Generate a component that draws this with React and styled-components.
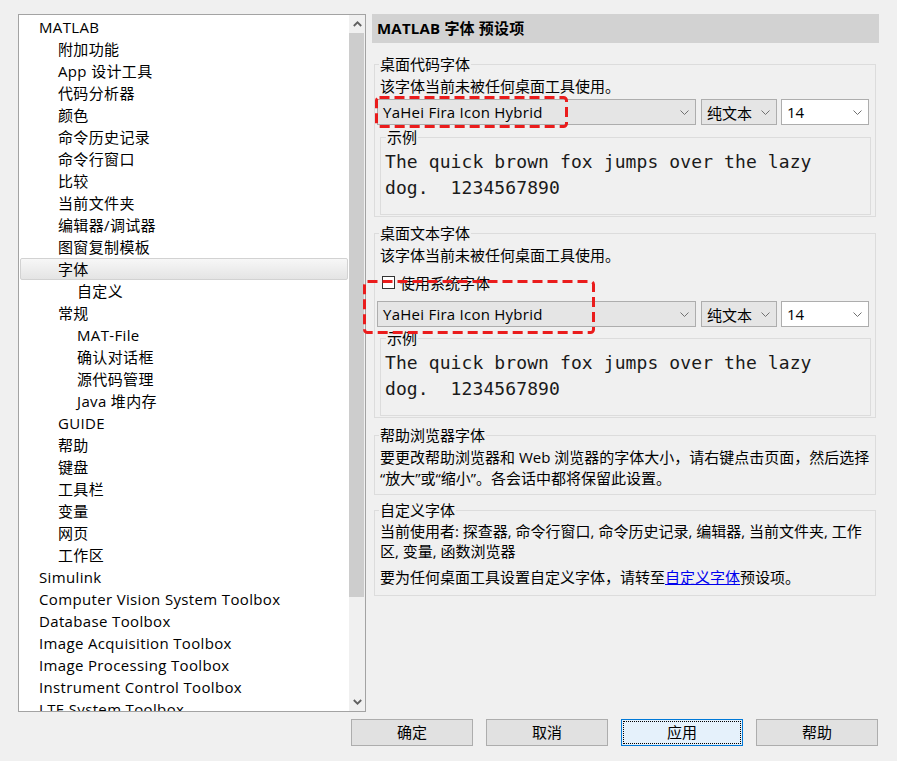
import React from 'react';
import styled, { createGlobalStyle } from 'styled-components';

const GlobalStyle = createGlobalStyle`
  body {
    margin: 0;
    background: #f0f0f0;
    font-family: "Open Sans", "Noto Sans CJK SC", sans-serif;
    font-size: 15px;
    color: #000;
  }
`;

const treeItems = [
  ['MATLAB', 0],
  ['附加功能', 1],
  ['App 设计工具', 1],
  ['代码分析器', 1],
  ['颜色', 1],
  ['命令历史记录', 1],
  ['命令行窗口', 1],
  ['比较', 1],
  ['当前文件夹', 1],
  ['编辑器/调试器', 1],
  ['图窗复制模板', 1],
  ['字体', 1, true],
  ['自定义', 2],
  ['常规', 1],
  ['MAT-File', 2],
  ['确认对话框', 2],
  ['源代码管理', 2],
  ['Java 堆内存', 2],
  ['GUIDE', 1],
  ['帮助', 1],
  ['键盘', 1],
  ['工具栏', 1],
  ['变量', 1],
  ['网页', 1],
  ['工作区', 1],
  ['Simulink', 0],
  ['Computer Vision System Toolbox', 0],
  ['Database Toolbox', 0],
  ['Image Acquisition Toolbox', 0],
  ['Image Processing Toolbox', 0],
  ['Instrument Control Toolbox', 0],
  ['LTE System Toolbox', 0],
];

const Chevron = ({ up }) => (
  <svg width="9" height="6" viewBox="0 0 9 6">
    <polyline
      points={up ? '0.8,5 4.5,1.3 8.2,5' : '0.8,1 4.5,4.7 8.2,1'}
      fill="none"
      stroke="#606060"
      strokeWidth="1.8"
    />
  </svg>
);

const SmallChevron = () => (
  <svg width="9" height="5" viewBox="0 0 9 5">
    <polyline points="0.5,0.5 4.5,4.5 8.5,0.5" fill="none" stroke="#707070" strokeWidth="1" />
  </svg>
);

const DashedMark = ({ left, top, width, height }) => (
  <Mark style={{ left, top }} width={width} height={height}>
    <rect
      x="1.5"
      y="1.5"
      width={width - 3}
      height={height - 3}
      rx="3"
      fill="none"
      stroke="#ea1c1c"
      strokeWidth="3"
      strokeDasharray="10 5"
    />
  </Mark>
);

const FontCombos = ({ children }) => (
  <>
    <Combo $width={319} $latin>
      YaHei Fira Icon Hybrid
      <SmallChevron />
    </Combo>
    <Combo $width={76} $gap={5}>
      纯文本
      <SmallChevron />
    </Combo>
    <Combo $width={88} $gap={4} $white>
      14
      <SmallChevron />
    </Combo>
    {children}
  </>
);

const App = () => {
  return (
    <>
      <GlobalStyle />
      <Window>
        <Body>
          <Tree>
            <TreeList>
              {treeItems.map(([label, level, selected]) => (
                <TreeRow key={label} $level={level} $selected={selected}>
                  {label}
                </TreeRow>
              ))}
            </TreeList>
            <ScrollBar>
              <ScrollButton>
                <Chevron up />
              </ScrollButton>
              <Thumb />
              <Track />
              <ScrollButton>
                <Chevron />
              </ScrollButton>
            </ScrollBar>
          </Tree>

          <Panel>
            <PanelHeader>MATLAB 字体 预设项</PanelHeader>
            <Groups>
              <Group $top={11}>
                <Legend>桌面代码字体</Legend>
                <Line>该字体当前未被任何桌面工具使用。</Line>
                <ComboRow $top={2}>
                  <FontCombos>
                    <DashedMark left={-2} top={-3} width={193} height={32} />
                  </FontCombos>
                </ComboRow>
                <Sample $top={2}>
                  <SampleLegend>示例</SampleLegend>
                  <SampleText>{'The quick brown fox jumps over the lazy\ndog.  1234567890'}</SampleText>
                </Sample>
              </Group>

              <Group $top={6}>
                <Legend>桌面文本字体</Legend>
                <Line>该字体当前未被任何桌面工具使用。</Line>
                <CheckRow>
                  <CheckBox />
                  使用系统字体
                </CheckRow>
                <ComboRow $top={8}>
                  <FontCombos>
                    <DashedMark left={-14} top={-21} width={232} height={54} />
                  </FontCombos>
                </ComboRow>
                <Sample $top={1}>
                  <SampleLegend>示例</SampleLegend>
                  <SampleText>{'The quick brown fox jumps over the lazy\ndog.  1234567890'}</SampleText>
                </Sample>
              </Group>

              <Group $top={7} $bottom={5}>
                <Legend>帮助浏览器字体</Legend>
                <Line>
                  要更改帮助浏览器和 Web 浏览器的字体大小，请右键点击页面，然后选择
                  <br />
                  “放大”或“缩小”。各会话中都将保留此设置。
                </Line>
              </Group>

              <Group $top={5} $bottom={8} $padTop={1}>
                <Legend>自定义字体</Legend>
                <Line $height={20}>
                  当前使用者: 探查器, 命令行窗口, 命令历史记录, 编辑器, 当前文件夹, 工作
                  <br />
                  区, 变量, 函数浏览器
                </Line>
                <Line $height={20} $top={6}>
                  要为任何桌面工具设置自定义字体，请转至<LinkText>自定义字体</LinkText>预设项。
                </Line>
              </Group>
            </Groups>
          </Panel>
        </Body>

        <Buttons>
          <Button>确定</Button>
          <Button>取消</Button>
          <Button $focused>
            <FocusRing>应用</FocusRing>
          </Button>
          <Button>帮助</Button>
        </Buttons>
      </Window>
    </>
  );
};

const Window = styled.div`
  width: 897px;
  height: 761px;
  padding: 14px 0 0 18px;
  box-sizing: border-box;
  overflow: hidden;
`;

const Body = styled.div`
  display: flex;
  align-items: flex-start;
  height: 698px;
`;

const Tree = styled.div`
  display: flex;
  width: 348px;
  height: 698px;
  box-sizing: border-box;
  border: 1px solid #a3a3a3;
  background: #fff;
`;

const TreeList = styled.div`
  flex: 1;
  overflow: hidden;
  padding-top: 1px;
`;

const TreeRow = styled.div`
  height: 22px;
  margin: 0 1px;
  padding-left: ${(p) => 18 + p.$level * 19}px;
  white-space: nowrap;
  box-sizing: border-box;
  border-radius: 2px;
  border: 1px solid ${(p) => (p.$selected ? '#d2d2d2' : 'transparent')};
  background: ${(p) => (p.$selected ? 'linear-gradient(#f7f7f7, #e4e4e4)' : 'transparent')};
  line-height: 20px;
  letter-spacing: 0.35px;
`;

const ScrollBar = styled.div`
  width: 16px;
  display: flex;
  flex-direction: column;
  background: #f0f0f0;
`;

const ScrollButton = styled.div`
  height: 18px;
  display: flex;
  align-items: center;
  justify-content: center;
`;

const Thumb = styled.div`
  height: 564px;
  margin: 0 1px 0 0;
  background: #cdcdcd;
`;

const Track = styled.div`
  flex: 1;
`;

const Panel = styled.div`
  width: 507px;
  margin-left: 6px;
`;

const PanelHeader = styled.div`
  height: 29px;
  line-height: 29px;
  padding-left: 5px;
  background: #d2d2d2;
  font-weight: 700;
  font-size: 15px;
  letter-spacing: 0.2px;
`;

const Groups = styled.div`
  margin: 0 3px 0 2px;
`;

const Group = styled.fieldset`
  margin: ${(p) => p.$top}px 0 0 0;
  min-width: 0;
  padding: ${(p) => p.$padTop ?? 2}px 4px ${(p) => p.$bottom ?? 1}px 5px;
  border: 1px solid #dcdcdc;
`;

const Legend = styled.legend`
  padding: 0 1px;
  line-height: 20px;
  margin-left: -1px;
`;

const Line = styled.div`
  line-height: ${(p) => p.$height ?? 21}px;
  margin-top: ${(p) => p.$top ?? 0}px;
  white-space: nowrap;
`;

const LinkText = styled.span`
  color: #0000ee;
  text-decoration: underline;
`;

const CheckRow = styled.div`
  display: flex;
  align-items: center;
  height: 21px;
  margin-top: 6px;
  padding-left: 2px;
  gap: 5px;
`;

const CheckBox = styled.span`
  width: 11px;
  height: 11px;
  border: 1px solid #333;
  background: #fff;
`;

const ComboRow = styled.div`
  position: relative;
  display: flex;
  margin: ${(p) => p.$top}px 0 0 -3px;
`;

const Combo = styled.div`
  display: flex;
  align-items: center;
  justify-content: space-between;
  width: ${(p) => p.$width}px;
  height: 26px;
  margin-left: ${(p) => p.$gap ?? 0}px;
  padding: 0 6px 0 5px;
  box-sizing: border-box;
  border: 1px solid #adadad;
  background: ${(p) => (p.$white ? '#fff' : '#e5e5e5')};
  white-space: nowrap;
  letter-spacing: ${(p) => (p.$latin ? '0.25px' : '0')};
`;

const Mark = styled.svg`
  position: absolute;
  pointer-events: none;
  overflow: visible;
`;

const Sample = styled.fieldset`
  margin: ${(p) => p.$top}px 0 0 0;
  min-width: 0;
  padding: 2px 4px 13px 5px;
  border: 1px solid #dcdcdc;
`;

const SampleLegend = styled.legend`
  padding: 0 1px;
  line-height: 20px;
`;

const SampleText = styled.div`
  font-family: "DejaVu Sans Mono", "Liberation Mono", monospace;
  font-size: 18px;
  line-height: 26px;
  letter-spacing: 0.1px;
  color: #1a1a1a;
  white-space: pre;
  margin-left: -1px;
`;

const Buttons = styled.div`
  display: flex;
  justify-content: flex-end;
  gap: 13px;
  margin: 7px 19px 0 0;
`;

const Button = styled.div`
  width: 122px;
  height: 27px;
  box-sizing: border-box;
  display: flex;
  align-items: stretch;
  justify-content: center;
  padding: ${(p) => (p.$focused ? '1px' : '0')};
  border: 1px solid ${(p) => (p.$focused ? '#0078d7' : '#adadad')};
  background: ${(p) => (p.$focused ? '#e5f1fb' : '#e1e1e1')};
  line-height: 25px;
  text-align: center;
`;

const FocusRing = styled.span`
  flex: 1;
  border: 1px dotted #000;
  line-height: 21px;
`;

export default App;
